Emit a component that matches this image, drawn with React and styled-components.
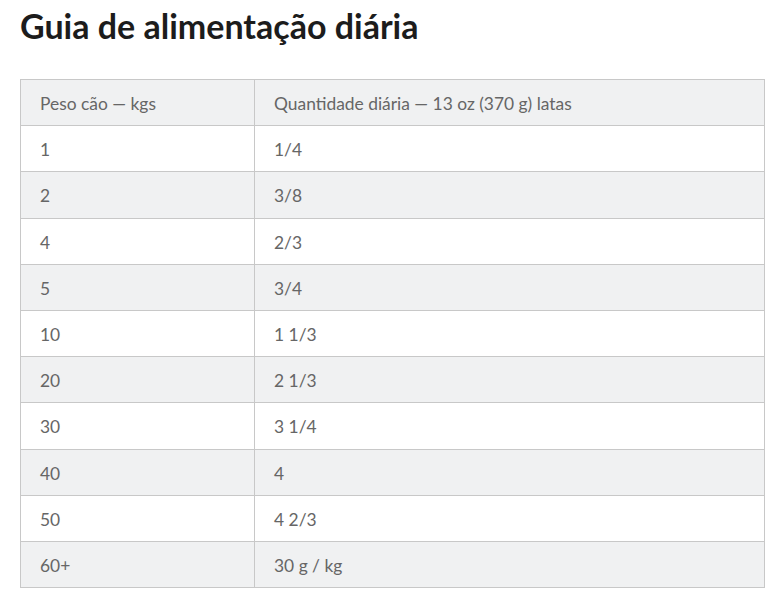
import styled, { createGlobalStyle } from "styled-components";

const GlobalStyle = createGlobalStyle`
  body {
    margin: 0;
    background: #fff;
    font-family: Lato, "Open Sans", sans-serif;
  }
`;

const Page = styled.div`
  padding: 0 11px 0 20px;
`;

const Title = styled.h1`
  margin: 0;
  padding-top: 5px;
  font-size: 34px;
  line-height: 42px;
  font-weight: 700;
  color: #1c1c1c;
`;

const Table = styled.table`
  margin-top: 32px;
  width: 745px;
  border-collapse: collapse;
  border: 1px solid #c8c8c8;
  font-size: 17.4px;
  color: #666;
`;

const Row = styled.tr`
  background: ${(p) => (p.$shaded ? "#f0f1f2" : "#fff")};
`;

const Cell = styled.td`
  height: 43.2px;
  padding: 2px 19px 0;
  border: 1px solid #c8c8c8;
  text-align: left;
  font-weight: 400;
  vertical-align: middle;
  &:first-child {
    width: 195px;
  }
`;

const rows = [
  ["1", "1/4"],
  ["2", "3/8"],
  ["4", "2/3"],
  ["5", "3/4"],
  ["10", "1 1/3"],
  ["20", "2 1/3"],
  ["30", "3 1/4"],
  ["40", "4"],
  ["50", "4 2/3"],
  ["60+", "30 g / kg"],
];

const App = () => {
  return (
    <Page>
      <GlobalStyle />
      <Title>Guia de alimentação diária</Title>
      <Table>
        <thead>
          <Row $shaded>
            <Cell as="th">Peso cão — kgs</Cell>
            <Cell as="th">Quantidade diária — 13 oz (370 g) latas</Cell>
          </Row>
        </thead>
        <tbody>
          {rows.map(([kg, qty], i) => (
            <Row key={kg} $shaded={i % 2 === 1}>
              <Cell>{kg}</Cell>
              <Cell>{qty}</Cell>
            </Row>
          ))}
        </tbody>
      </Table>
    </Page>
  );
};

export default App;
